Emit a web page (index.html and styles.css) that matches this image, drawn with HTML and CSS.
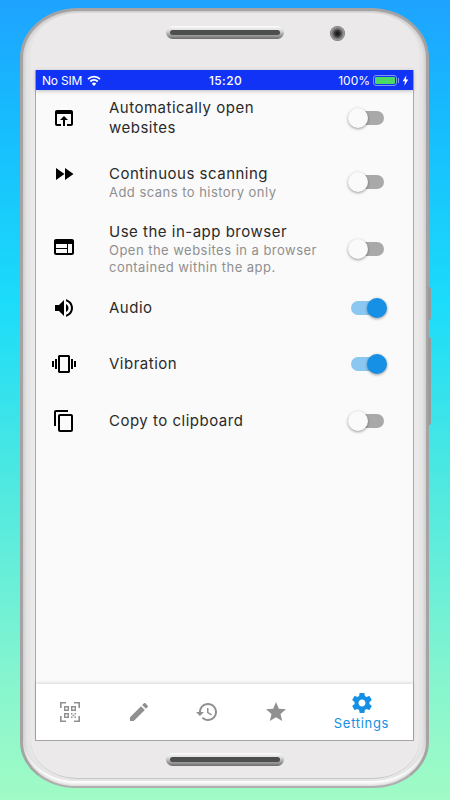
FILE: index.html
```html
<!DOCTYPE html>
<html lang="en">
<head>
  <meta charset="UTF-8">
  <title>Settings</title>
  <meta name="viewport" content="width=device-width, initial-scale=1.0">
  <link rel="stylesheet" href="styles.css">
</head>
<body>
  <div class="side-key side-key-power"></div>
  <div class="side-key side-key-volume"></div>

  <div class="phone">
    <div class="face">
      <div class="earpiece"><div class="speaker"><span></span></div></div>
      <div class="camera"></div>

      <div class="screen">
        <div class="status">
          <div class="status-left">
            <span>No SIM</span>
            <svg class="wifi" viewBox="0 0 14 11"><path d="M7 11 4.800 8.700a3.100 3.100 0 0 1 4.400 0z"/><path class="wifi-arc" d="M3.300 6.500a5.300 5.300 0 0 1 7.400 0M1 4.100a8.600 8.600 0 0 1 12 0"/></svg>
          </div>
          <div class="status-time">15:20</div>
          <div class="status-right">
            <span>100%</span>
            <div class="battery"><span></span></div>
            <svg class="bolt" viewBox="0 0 8 12"><path d="M5 0 .8 6.800h2.600L2.600 12l4.600-7.200H4.400z"/></svg>
          </div>
        </div>

        <div class="settings">
          <div class="row">
            <svg class="icon" viewBox="0 0 24 24"><path d="M19 4H5c-1.110 0-2 .9-2 2v12c0 1.100.89 2 2 2h4v-2H5V8h14v10h-4v2h4c1.100 0 2-.9 2-2V6c0-1.100-.89-2-2-2zm-7 6l-4 4h3v6h2v-6h3l-4-4z"/></svg>
            <div class="row-text"><div class="title">Automatically open<br>websites</div></div>
            <div class="switch"><span></span></div>
          </div>
          <div class="row row-second">
            <svg class="icon" viewBox="0 0 24 24"><path d="M4 18l8.500-6L4 6v12zm9-12v12l8.500-6L13 6z"/></svg>
            <div class="row-text">
              <div class="title">Continuous scanning</div>
              <div class="sub">Add scans to history only</div>
            </div>
            <div class="switch"><span></span></div>
          </div>
          <div class="row row-third">
            <svg class="icon" viewBox="0 0 24 24"><path d="M20 4H4c-1.100 0-1.990.9-1.990 2L2 18c0 1.100.9 2 2 2h16c1.100 0 2-.9 2-2V6c0-1.100-.9-2-2-2zm-5 14H4v-4h11v4zm0-5H4V9h11v4zm5 5h-4V9h4v9z"/></svg>
            <div class="row-text">
              <div class="title">Use the in-app browser</div>
              <div class="sub">Open the websites in a browser<br>contained within the app.</div>
            </div>
            <div class="switch"><span></span></div>
          </div>
          <div class="row">
            <svg class="icon" viewBox="0 0 24 24"><path d="M3 9v6h4l5 5V4L7 9H3zm13.500 3c0-1.770-1.020-3.290-2.500-4.030v8.050c1.480-.73 2.500-2.250 2.500-4.020zM14 3.230v2.060c2.890.86 5 3.540 5 6.710s-2.110 5.850-5 6.710v2.060c4.010-.91 7-4.490 7-8.770s-2.990-7.860-7-8.770z"/></svg>
            <div class="row-text"><div class="title">Audio</div></div>
            <div class="switch on"><span></span></div>
          </div>
          <div class="row">
            <svg class="icon" viewBox="0 0 24 24"><path d="M0 15h2V9H0v6zm3 2h2V7H3v10zm19-8v6h2V9h-2zm-3 8h2V7h-2v10zM16.500 3h-9C6.670 3 6 3.670 6 4.500v15c0 .83.67 1.500 1.500 1.500h9c.83 0 1.500-.67 1.500-1.500v-15c0-.83-.67-1.500-1.500-1.500zM16 19H8V5h8v14z"/></svg>
            <div class="row-text"><div class="title">Vibration</div></div>
            <div class="switch on"><span></span></div>
          </div>
          <div class="row row-last">
            <svg class="icon" viewBox="0 0 24 24"><path d="M16 1H4c-1.100 0-2 .9-2 2v14h2V3h12V1zm3 4H8c-1.100 0-2 .9-2 2v14c0 1.100.9 2 2 2h11c1.100 0 2-.9 2-2V7c0-1.100-.9-2-2-2zm0 16H8V7h11v14z"/></svg>
            <div class="row-text"><div class="title">Copy to clipboard</div></div>
            <div class="switch"><span></span></div>
          </div>
        </div>

        <div class="tabs">
          <div class="tab">
            <svg class="tab-icon" viewBox="0 0 24 24"><path d="M2 8V2h6v1.600H3.600V8zM16 2h6v6h-1.600V3.600H16zM2 16h1.600v4.400H8V22H2zM20.400 16H22v6h-6v-1.600h4.400z"/><path fill-rule="evenodd" d="M6 6h5v5H6zm1.400 1.400v2.200h2.200V7.400zM13 6h5v5h-5zm1.400 1.400v2.200h2.200V7.400zM6 13h5v5H6zm1.400 1.400v2.200h2.200v-2.200z"/><path d="M13 13h1.500v1.500H13zM16.500 13H18v1.500h-1.500zM14.700 14.700h1.600v1.600h-1.600zM13 16.500h1.500V18H13zM16.500 16.500H18V18h-1.500z"/></svg>
          </div>
          <div class="tab">
            <svg class="tab-icon" viewBox="0 0 24 24"><path d="M3 17.250V21h3.750L17.810 9.940l-3.750-3.750L3 17.250zM20.710 7.040c.39-.39.39-1.020 0-1.410l-2.340-2.340c-.39-.39-1.020-.39-1.410 0l-1.830 1.830 3.750 3.750 1.830-1.830z"/></svg>
          </div>
          <div class="tab">
            <svg class="tab-icon" viewBox="0 0 24 24"><path d="M13 3c-4.970 0-9 4.030-9 9H1l3.890 3.890.07.140L9 12H6c0-3.870 3.130-7 7-7s7 3.130 7 7-3.130 7-7 7c-1.930 0-3.680-.79-4.940-2.060l-1.420 1.420C8.270 19.990 10.510 21 13 21c4.970 0 9-4.030 9-9s-4.030-9-9-9zm-1 5v5l4.280 2.540.72-1.210-3.500-2.080V8H12z"/></svg>
          </div>
          <div class="tab">
            <svg class="tab-icon" viewBox="0 0 24 24"><path d="M12 17.270L18.180 21l-1.640-7.030L22 9.240l-7.190-.61L12 2 9.190 8.630 2 9.240l5.460 4.730L5.820 21z"/></svg>
          </div>
          <div class="tab tab-active">
            <svg class="tab-icon" viewBox="0 0 24 24"><path d="M19.430 12.980c.04-.32.07-.64.07-.98s-.03-.66-.07-.98l2.110-1.650c.19-.15.24-.42.12-.64l-2-3.460c-.12-.22-.39-.3-.61-.22l-2.490 1c-.52-.4-1.080-.73-1.690-.98l-.38-2.650C14.460 2.180 14.250 2 14 2h-4c-.25 0-.46.18-.49.42l-.38 2.650c-.61.25-1.170.59-1.690.98l-2.490-1c-.23-.09-.49 0-.61.22l-2 3.460c-.13.22-.07.49.12.64l2.110 1.650c-.04.32-.07.65-.07.98s.03.66.07.98l-2.110 1.650c-.19.15-.24.42-.12.64l2 3.460c.12.22.39.3.61.22l2.490-1c.52.4 1.080.73 1.690.98l.38 2.650c.03.24.24.42.49.42h4c.25 0 .46-.18.49-.42l.38-2.650c.61-.25 1.170-.59 1.690-.98l2.490 1c.23.09.49 0 .61-.22l2-3.460c.12-.22.07-.49-.12-.64l-2.110-1.650zM12 15.500c-1.930 0-3.500-1.570-3.500-3.500s1.570-3.500 3.500-3.500 3.500 1.570 3.500 3.500-1.570 3.500-3.500 3.500z"/></svg>
            <span>Settings</span>
          </div>
        </div>
      </div>

      <div class="chin"><div class="speaker"><span></span></div></div>
    </div>
  </div>
</body>
</html>
```

FILE: styles.css
```css
html, body { height: 100%; }
body {
  margin: 0;
  padding: 8px 21px 12px 20px;
  box-sizing: border-box;
  position: relative;
  overflow: hidden;
  font-family: 'Inter', sans-serif;
  background: linear-gradient(180deg, #1ea3ff 0%, #16bcfd 15%, #1bdcfa 38%, #44e6e4 56%, #8af6cd 87%, #a0fbc5 100%);
}
.phone {
  height: 780px;
  box-sizing: border-box;
  border: 3px solid #a5a3a4;
  border-bottom: 2px solid #b0aeaf;
  border-radius: 58px 58px 56px 56px / 50px 50px 46px 46px;
  padding: 2px 7px 7px 8px;
  background: #e6e6e6;
  box-shadow: inset 0 0 5px #b4b4b4, inset 0 -5px 0 #fff;
}
.face {
  height: 100%;
  box-sizing: border-box;
  position: relative;
  padding: 0 5px 0 4px;
  display: flex;
  flex-direction: column;
  background: #ebe9ea;
  border-radius: 48px 48px 46px 46px / 40px 40px 38px 38px;
  border-bottom: 1px solid #c6c6c6;
}
.earpiece { height: 57px; box-sizing: border-box; padding: 13px 0 0; display: flex; justify-content: center; }
.chin { flex: 1; display: flex; align-items: center; justify-content: center; }
.speaker {
  width: 118px;
  height: 13px;
  box-sizing: border-box;
  padding: 4px;
  border-radius: 7px;
  background: linear-gradient(180deg, #fdfdfd 0%, #dcdcdc 35%, #6c6c6c 100%);
}
.speaker span { display: block; height: 5px; border-radius: 3px; background: #4c4e50; }
.camera {
  position: absolute;
  top: 13px;
  left: 299px;
  width: 15px;
  height: 15px;
  border-radius: 50%;
  background: radial-gradient(circle, #111 0, #333 25%, #9b9b9b 60%, #333 85%, #222 100%);
}

.screen {
  height: 671px;
  box-sizing: border-box;
  border: 1px solid #a9a9a9;
  border-top: 0;
  display: flex;
  flex-direction: column;
  background: #fafafa;
}

.status {
  flex: none;
  height: 20px;
  display: grid;
  grid-template-columns: 1fr auto 1fr;
  align-items: center;
  padding: 0 4px 0 6px;
  background: #1033f5;
  color: #fff;
  font-size: 12px;
  box-shadow: 0 1px 4px rgba(0,0,0,0.25);
  position: relative;
}
.status-left { display: flex; align-items: center; gap: 5px; letter-spacing: -0.2px; }
.status-time { font-weight: 500; letter-spacing: 0.4px; }
.status-right { display: flex; align-items: center; justify-content: flex-end; gap: 3px; }
.wifi { width: 14px; height: 11px; fill: #fff; }
.wifi-arc { fill: none; stroke: #fff; stroke-width: 1.900; }
.bolt { width: 7px; height: 11px; fill: #fff; margin-left: 2px; }
.battery {
  position: relative;
  width: 24px;
  height: 11px;
  box-sizing: border-box;
  padding: 1px;
  border: 1px solid #7f97f7;
  border-radius: 3px;
}
.battery span { display: block; height: 100%; border-radius: 1px; background: #4cd964; }
.battery::after {
  content: "";
  position: absolute;
  right: -3px;
  top: 2px;
  width: 1px;
  height: 5px;
  background: #7f97f7;
}

.settings { flex: 1; }
.row {
  height: 56px;
  display: flex;
  align-items: center;
  padding: 0 29px 0 16px;
}
.row-second { height: 72px; }
.row-second .icon { margin-bottom: 16px; }
.row-third { height: 62px; }
.row-third .icon { margin-bottom: 4px; }
.row-last { height: 58px; }
.icon { flex: none; width: 24px; height: 24px; fill: #000; }
.row-text { flex: 1; padding-left: 33px; }
.title { font-size: 15px; line-height: 20px; letter-spacing: 0.5px; color: #2a2a2a; }
.sub { font-size: 13px; line-height: 17px; letter-spacing: 0.47px; color: #8f8f8f; }

.switch {
  flex: none;
  position: relative;
  width: 33px;
  height: 14px;
  border-radius: 7px;
  background: #a9a9a9;
}
.switch span {
  position: absolute;
  top: -3px;
  left: -3px;
  width: 20px;
  height: 20px;
  border-radius: 50%;
  background: #fafafa;
  box-shadow: 0 1px 3px rgba(0,0,0,0.4);
}
.switch.on { background: #8ac8f2; }
.switch.on span { left: 16px; background: #1590e4; }

.tabs {
  flex: none;
  height: 56px;
  display: grid;
  grid-template-columns: repeat(4, 68.500px) 1fr;
  background: #fff;
  box-shadow: 0 -1px 3px rgba(0,0,0,0.14);
  position: relative;
}
.tab {
  display: flex;
  flex-direction: column;
  align-items: center;
  justify-content: center;
}
.tab-icon { width: 24px; height: 24px; fill: #909090; }
.tab-active { color: #1590e4; font-size: 13px; line-height: 16px; letter-spacing: 0.7px; padding-bottom: 2px; }
.tab-active .tab-icon { fill: #1590e4; }

.side-key {
  position: absolute;
  left: 428px;
  width: 3px;
  background: #9a9a9a;
  border-radius: 0 2px 2px 0;
}
.side-key-power { top: 287px; height: 33px; }
.side-key-volume { top: 337px; height: 88px; }
```
